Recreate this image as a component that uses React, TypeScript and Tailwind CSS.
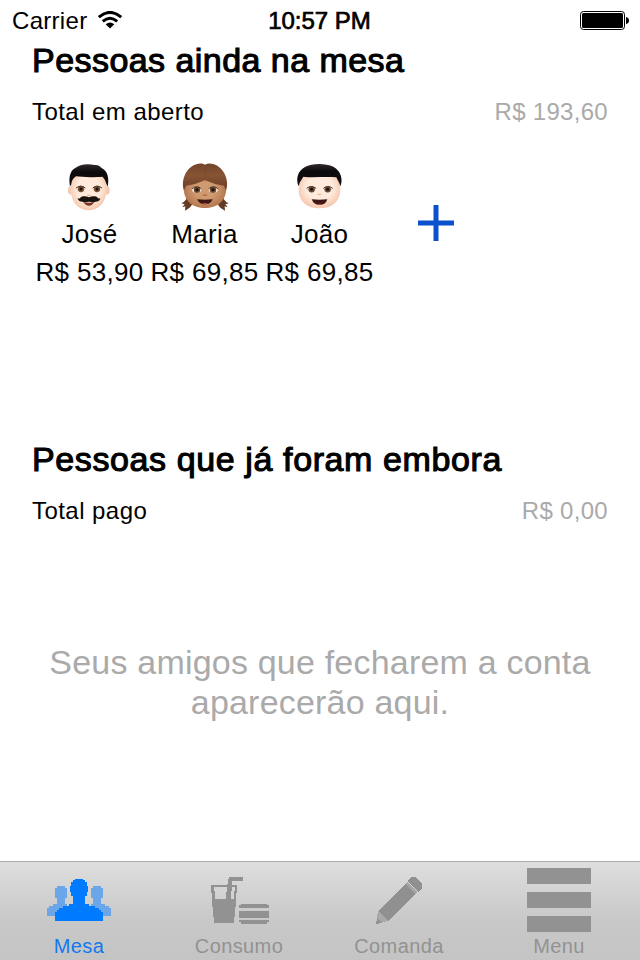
import type { ReactNode } from 'react';

const Eyes = ({ iris }: { iris: string }) => (
  <g>
    <ellipse cx="62" cy="102" rx="14" ry="8.5" fill="#f1e4da" />
    <ellipse cx="112" cy="102" rx="14" ry="8.5" fill="#f1e4da" />
    <circle cx="63" cy="102" r="9.5" fill={iris} />
    <circle cx="111" cy="102" r="9.5" fill={iris} />
    <circle cx="63" cy="102" r="4.5" fill="#1d120b" />
    <circle cx="111" cy="102" r="4.5" fill="#1d120b" />
    <path d="M48 99 Q62 88 76 99 M126 99 Q112 88 98 99" fill="none" stroke="#4a3527" strokeWidth="3" />
  </g>
);

const JoseFace = () => (
  <svg viewBox="0 0 180 180" className="ml-7 size-[60px] self-start">
    <ellipse cx="32" cy="106" rx="8" ry="13" fill="#f4c9b0" />
    <ellipse cx="141" cy="106" rx="8" ry="13" fill="#f4c9b0" />
    <path d="M31 78 Q34 50 86 50 Q138 50 140 78 L139 112 C136 146 114 166 86 166 C58 166 36 146 33 112 Z" fill="url(#skinLight)" />
    <path
      d="M30 94 C26 72 28 48 46 39 C58 29 80 25 104 30 C112 29 120 33 124 38 C144 48 148 70 143 95 L138 84 C137 78 133 70 127 65 C108 67 66 67 48 64 C38 70 34 80 34 88 Z"
      fill="url(#hairBlack)"
    />
    <Eyes iris="#795131" />
    <path d="M82 119 Q87 123 92 119" fill="none" stroke="#eab79b" strokeWidth="4" />
    <path d="M70 141 Q87 145 103 141 Q97 152 87 152 Q76 152 70 141 Z" fill="#7c3328" />
    <path d="M87 127 C76 122 65 124 61 128 Q57 132 53 130 C54 142 74 143 87 140 C100 143 120 142 121 130 Q117 132 113 128 C109 124 98 122 87 127 Z" fill="#17110f" />
  </svg>
);

const MariaFace = () => (
  <svg viewBox="0 0 180 180" className="ml-7 size-[60px] self-start">
    <path d="M37 127 C30 138 27 143 19 144 Q24 148 29 147 L22 157 L31 154 L30 167 Q48 159 53 145 Z" fill="#633a24" />
    <path d="M143 127 C150 138 153 143 161 144 Q156 148 151 147 L158 157 L149 154 L150 167 Q132 159 127 145 Z" fill="#633a24" />
    <path d="M26 95 Q29 52 89 52 Q151 52 154 95 C155 139 125 159 90 159 C54 159 25 139 26 95 Z" fill="url(#skinTan)" />
    <path d="M27 106 C18 84 27 49 52 33 C64 25 81 23 90 29 C101 23 117 26 129 34 C153 50 162 84 153 106 L147 92 Q116 88 90 76 Q64 88 33 92 Z" fill="url(#hairBrown)" />
    <path d="M90 31 L90 72" stroke="#75452b" strokeWidth="1.5" />
    <g transform="translate(3 2)"><Eyes iris="#6a482a" /></g>
    <path d="M84 119 Q90 123 96 119" fill="none" stroke="#a96b43" strokeWidth="4" />
    <path d="M66 133 Q90 135 113 133 Q108 148 90 148 Q72 148 66 133 Z" fill="#3e1714" />
    <path d="M80 146 Q90 142 100 146 Q90 149 80 146 Z" fill="#b84c40" />
  </svg>
);

const JoaoFace = () => (
  <svg viewBox="0 0 180 180" className="ml-7 size-[60px] self-start">
    <path d="M27 88 Q29 50 88 50 Q149 50 150 88 L151 108 C149 141 124 160 88 160 C52 160 28 141 26 108 Z" fill="url(#skinLight)" />
    <path d="M26 94 C17 74 22 48 45 36 C66 24 106 24 130 35 C153 48 160 74 151 94 L148 85 L139 67 C112 64 66 69 40 65 L29 83 Z" fill="url(#hairBlack)" />
    <g transform="translate(2 1)"><Eyes iris="#6c4a31" /></g>
    <path d="M83 117 Q88 121 94 117" fill="none" stroke="#eab79b" strokeWidth="4" />
    <path d="M65 133 Q88 135 112 133 Q107 150 89 150 Q71 150 65 133 Z" fill="#3e1714" />
    <path d="M79 148 Q89 144 99 148 Q89 151 79 148 Z" fill="#b84c40" />
  </svg>
);

const FaceGradients = () => (
  <svg className="absolute size-0" aria-hidden="true">
    <defs>
      <radialGradient id="skinLight" cx="50%" cy="45%" r="58%">
        <stop offset="55%" stopColor="#ffeadb" />
        <stop offset="100%" stopColor="#f3c3a8" />
      </radialGradient>
      <radialGradient id="skinTan" cx="50%" cy="50%" r="58%">
        <stop offset="40%" stopColor="#d09a70" />
        <stop offset="100%" stopColor="#ad6d45" />
      </radialGradient>
      <linearGradient id="hairBlack" x1="0" y1="0" x2="0" y2="1">
        <stop offset="0%" stopColor="#30292a" />
        <stop offset="35%" stopColor="#0c090b" />
        <stop offset="100%" stopColor="#151011" />
      </linearGradient>
      <linearGradient id="hairBrown" x1="0" y1="0" x2="0" y2="1">
        <stop offset="0%" stopColor="#74442a" />
        <stop offset="45%" stopColor="#875434" />
        <stop offset="100%" stopColor="#683c25" />
      </linearGradient>
    </defs>
  </svg>
);

const people = [
  { name: 'José', amount: 'R$ 53,90', Face: JoseFace },
  { name: 'Maria', amount: 'R$ 69,85', Face: MariaFace },
  { name: 'João', amount: 'R$ 69,85', Face: JoaoFace },
];

const StatusBar = () => (
  <header className="grid h-10 grid-cols-3 items-center pt-0.5 text-[24px] leading-6">
    <div className="flex items-center gap-2.5 pl-3">
      <span className="tracking-[0.3px]">Carrier</span>
      <svg viewBox="0 0 26 18" className="-mt-0.5 h-[18px] w-[26px]">
        <path d="M1.8 6.2 Q13 -3.4 24.2 6.2" fill="none" stroke="#000" strokeWidth="3" />
        <path d="M5.8 10.4 Q13 4.2 20.2 10.4" fill="none" stroke="#000" strokeWidth="3" />
        <path d="M8.7 13.2 Q13 9.6 17.3 13.2 L13 17.5 Z" />
      </svg>
    </div>
    <span className="pr-px text-center [-webkit-text-stroke:0.7px_#000]">10:57 PM</span>
    <svg viewBox="0 0 50 20" className="-mt-0.5 mr-[10px] h-5 w-[50px] justify-self-end">
      <rect x="0.5" y="1.5" width="44" height="18" rx="3" fill="none" stroke="#000" />
      <rect x="2" y="3" width="41" height="15" rx="1.5" />
      <path d="M46 7 Q49 7.5 49 10.5 Q49 13.5 46 14 Z" />
    </svg>
  </header>
);

type SectionHeaderProps = { title: string; label: string; total: string; tracking: string };

const SectionHeader = ({ title, label, total, tracking }: SectionHeaderProps) => (
  <div className="px-8">
    <h2 className={`text-[34px] leading-10 [-webkit-text-stroke:1.1px_#000] ${tracking}`}>{title}</h2>
    <div className="mt-5 flex justify-between text-[24px] leading-6 tracking-[0.3px]">
      <span className="tracking-[0.45px]">{label}</span>
      <span className="text-[#aaa]">{total}</span>
    </div>
  </div>
);

const MesaIcon = () => (
  <svg viewBox="0 0 32 32" className="size-16">
    <path
      d="M5 9h4v1h1v5h-1v3h1v1h3v5H0v-4h1v-1h2v-1h2v-3h-1v-5h1z M23 9h4v1h1v5h-1v3h2v1h2v1h1v4H19v-5h3v-1h1v-3h-1v-5h1z"
      fill="#6ba7e8"
    />
    <path
      d="M13 6h1v-.5h4v.5h1v1h1v2h.5v3H20v2h-1v4h2v1h3v1h2v1h1v1h1v4.5H4V22h1v-1h1v-1h2v-1h3v-1h2v-4h-1v-2h-.5V9h.5V7h1z"
      fill="#007aff"
    />
  </svg>
);

const ConsumoIcon = () => (
  <svg viewBox="0 0 64 64" className="size-16" fill="#929292">
    <path d="M4 17h17v2H7v4h1v8h19v-8h1v-4h-4v-2h6v8h-1v14h-1v10h-1v6H7v-6H6V39H5V25H4z" />
    <path d="M22 9h14v4H25v10h-1v8h-5v-7h1v-8h1v-5h1z" />
    <path d="M34 36h26v1h2v3H32v-3h2z M32 43h30v7H32z M32 52h30v2h-2v2H34v-2h-2z" />
  </svg>
);

const ComandaIcon = () => (
  <svg viewBox="0 0 64 64" className="size-16" shapeRendering="crispEdges">
    <path d="M38 16 L48 26 L21 53 L11 43 Z" fill="#909090" />
    <path d="M11 43 L21 53 L9 56 Z" fill="#a9a9a9" />
    <path d="M10 50 L15 55 L9 56 Z" fill="#939393" />
    <path d="M38 16 L40 14 L50 24 L48 26 Z" fill="#a5a5a5" />
    <path d="M40 13 L44 9 H48 L55 16 V20 L51 24 Z" fill="#909090" />
  </svg>
);

const MenuIcon = () => (
  <svg viewBox="0 0 64 64" className="size-16" fill="#929292">
    <path d="M0 0h64v16H0z M0 24h64v16H0z M0 48h64v16H0z" />
  </svg>
);

const TabItem = ({ label, active, children }: { label: string; active?: boolean; children: ReactNode }) => (
  <button className="flex flex-col items-center pt-1.5 pr-0.5">
    {children}
    <span className={`mt-0.5 text-[20px] leading-6 tracking-[0.4px] ${active ? 'text-[#1079f0]' : 'text-[#929292]'}`}>
      {label}
    </span>
  </button>
);

export default function App() {
  return (
    <div className="flex h-[960px] w-[640px] flex-col overflow-hidden bg-white font-['Liberation_Sans',Arial,sans-serif] text-black">
      <FaceGradients />
      <StatusBar />

      <section className="h-[399px]">
        <SectionHeader title="Pessoas ainda na mesa" label="Total em aberto" total="R$ 193,60" tracking="tracking-[0.45px]" />
        <div className="mt-[31px] flex pl-8">
          {people.map(({ name, amount, Face }) => (
            <div key={name} className="flex w-[115px] flex-col items-center text-[26px] leading-[38px] tracking-[0.3px] whitespace-nowrap">
              <Face />
              <span>{name}</span>
              <span>{amount}</span>
            </div>
          ))}
          <button className="flex h-[136px] w-[117px] items-center justify-center" aria-label="Adicionar pessoa">
            <svg viewBox="0 0 36 36" className="size-9" fill="#0b50cc">
              <path d="M0 15.5h36v5H0z M15.5 0h5v36h-5z" />
            </svg>
          </button>
        </div>
      </section>

      <section className="flex-1">
        <SectionHeader title="Pessoas que já foram embora" label="Total pago" total="R$ 0,00" tracking="tracking-[0.61px]" />
        <p className="mt-[119px] text-center text-[34px] leading-10 tracking-[0.2px] text-[#aaa]">
          Seus amigos que fecharem a conta
          <br />
          aparecerão aqui.
        </p>
      </section>

      <nav className="grid h-[99px] grid-cols-4 border-t border-[#acacac] bg-linear-to-b from-[#dedede] via-[#c8c8c8] via-60% to-[#c4c4c4]">
        <TabItem label="Mesa" active><MesaIcon /></TabItem>
        <TabItem label="Consumo"><ConsumoIcon /></TabItem>
        <TabItem label="Comanda"><ComandaIcon /></TabItem>
        <TabItem label="Menu"><MenuIcon /></TabItem>
      </nav>
    </div>
  );
}
